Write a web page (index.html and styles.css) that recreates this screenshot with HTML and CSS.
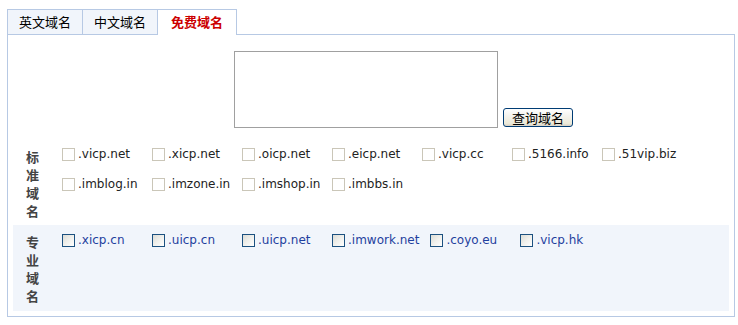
FILE: index.html
```html
<!DOCTYPE html>
<html lang="zh-CN">
<head>
    <meta charset="UTF-8">
    <title>免费域名查询</title>
    <link rel="stylesheet" href="styles.css">
</head>
<body>
    <!-- 域名查询 -->
    <div class="domain-box">
        <ul class="tabs">
            <li>英文域名</li>
            <li>中文域名</li>
            <li class="active">免费域名</li>
        </ul>

        <div class="panel">
            <div class="query">
                <textarea></textarea>
                <button type="button">查询域名</button>
            </div>

            <!-- 标准域名 -->
            <div class="group">
                <div class="group-title">标准域名</div>
                <ul class="domains">
                    <li><label><input type="checkbox">.vicp.net</label></li>
                    <li><label><input type="checkbox">.xicp.net</label></li>
                    <li><label><input type="checkbox">.oicp.net</label></li>
                    <li><label><input type="checkbox">.eicp.net</label></li>
                    <li><label><input type="checkbox">.vicp.cc</label></li>
                    <li><label><input type="checkbox">.5166.info</label></li>
                    <li><label><input type="checkbox">.51vip.biz</label></li>
                    <li><label><input type="checkbox">.imblog.in</label></li>
                    <li><label><input type="checkbox">.imzone.in</label></li>
                    <li><label><input type="checkbox">.imshop.in</label></li>
                    <li><label><input type="checkbox">.imbbs.in</label></li>
                </ul>
            </div>

            <!-- 专业域名 -->
            <div class="group pro">
                <div class="group-title">专业域名</div>
                <ul class="domains">
                    <li><label><input type="checkbox">.xicp.cn</label></li>
                    <li><label><input type="checkbox">.uicp.cn</label></li>
                    <li><label><input type="checkbox">.uicp.net</label></li>
                    <li><label><input type="checkbox">.imwork.net</label></li>
                    <li><label><input type="checkbox">.coyo.eu</label></li>
                    <li><label><input type="checkbox">.vicp.hk</label></li>
                </ul>
            </div>
        </div>
    </div>
</body>
</html>
```

FILE: styles.css
```css
* {
    margin: 0;
    padding: 0;
    box-sizing: border-box;
}

body {
    margin: 0;
    padding: 9px 0 0 7px;
    background: #ffffff;
    color: #000000;
    font-family: "DejaVu Sans", "Noto Sans CJK SC", sans-serif;
    font-size: 12px;
}

.domain-box {
    width: 728px;
}

/* 标签页 */
.tabs {
    display: flex;
    align-items: flex-start;
    list-style: none;
    margin-bottom: -1px;
}

.tabs li {
    height: 25px;
    padding: 0 11px;
    margin-right: -1px;
    border: 1px solid #b7c9e4;
    border-bottom: none;
    background: #f1f5fb;
    font-family: "Noto Sans CJK SC", sans-serif;
    font-size: 13px;
    line-height: 23px;
    color: #000000;
}

.tabs li.active {
    position: relative;
    z-index: 1;
    height: 26px;
    padding: 0 13px;
    background: #ffffff;
    color: #cc0000;
    font-weight: bold;
}

/* 面板 */
.panel {
    border: 1px solid #b7c9e4;
    padding: 5px;
}

.query {
    display: flex;
    align-items: flex-end;
    padding: 11px 0 12px 221px;
}

.query textarea {
    width: 264px;
    height: 77px;
    border: 1px solid #a0a0a0;
    resize: none;
    background: #ffffff;
}

.query button {
    width: 70px;
    height: 19px;
    margin: 0 0 1px 5px;
    padding: 0;
    border: 1px solid #003c74;
    border-radius: 3px;
    background: linear-gradient(#ffffff 0%, #f4f3ee 40%, #ece9d8 85%, #d6d0c5 100%);
    font-family: "Noto Sans CJK SC", sans-serif;
    font-size: 13px;
    line-height: 15px;
    color: #000000;
}

/* 域名分组 */
.group {
    display: flex;
    padding: 8px 0 5px;
}

.group.pro {
    background: #f1f5fb;
    padding-bottom: 6px;
}

.group-title {
    width: 40px;
    padding: 0 13px;
    font-family: "Noto Sans CJK SC", sans-serif;
    font-size: 13px;
    font-weight: bold;
    line-height: 18px;
    color: #444444;
    word-break: break-all;
}

.domains {
    flex: 1;
    display: flex;
    flex-wrap: wrap;
    align-content: flex-start;
    row-gap: 10px;
    list-style: none;
    padding: 0 0 0 9px;
    margin-top: -4px;
}

.group.pro .domains {
    margin-top: -3px;
}

.domains li {
    min-width: 90px;
    height: 20px;
    padding-right: 11px;
}

.domains label {
    display: flex;
    align-items: center;
    gap: 3px;
    height: 20px;
    white-space: nowrap;
    color: #222222;
}

.group.pro .domains label {
    color: #1f3f9e;
}

.domains input {
    appearance: none;
    -webkit-appearance: none;
    width: 13px;
    height: 13px;
    margin: 0;
    border: 1px solid #cac6b8;
    background: #ffffff;
    flex-shrink: 0;
}

.group.pro .domains input {
    border-color: #1c5180;
    background: linear-gradient(135deg, #dcdcd6 0%, #f0f0ec 50%, #ffffff 100%);
}
```
